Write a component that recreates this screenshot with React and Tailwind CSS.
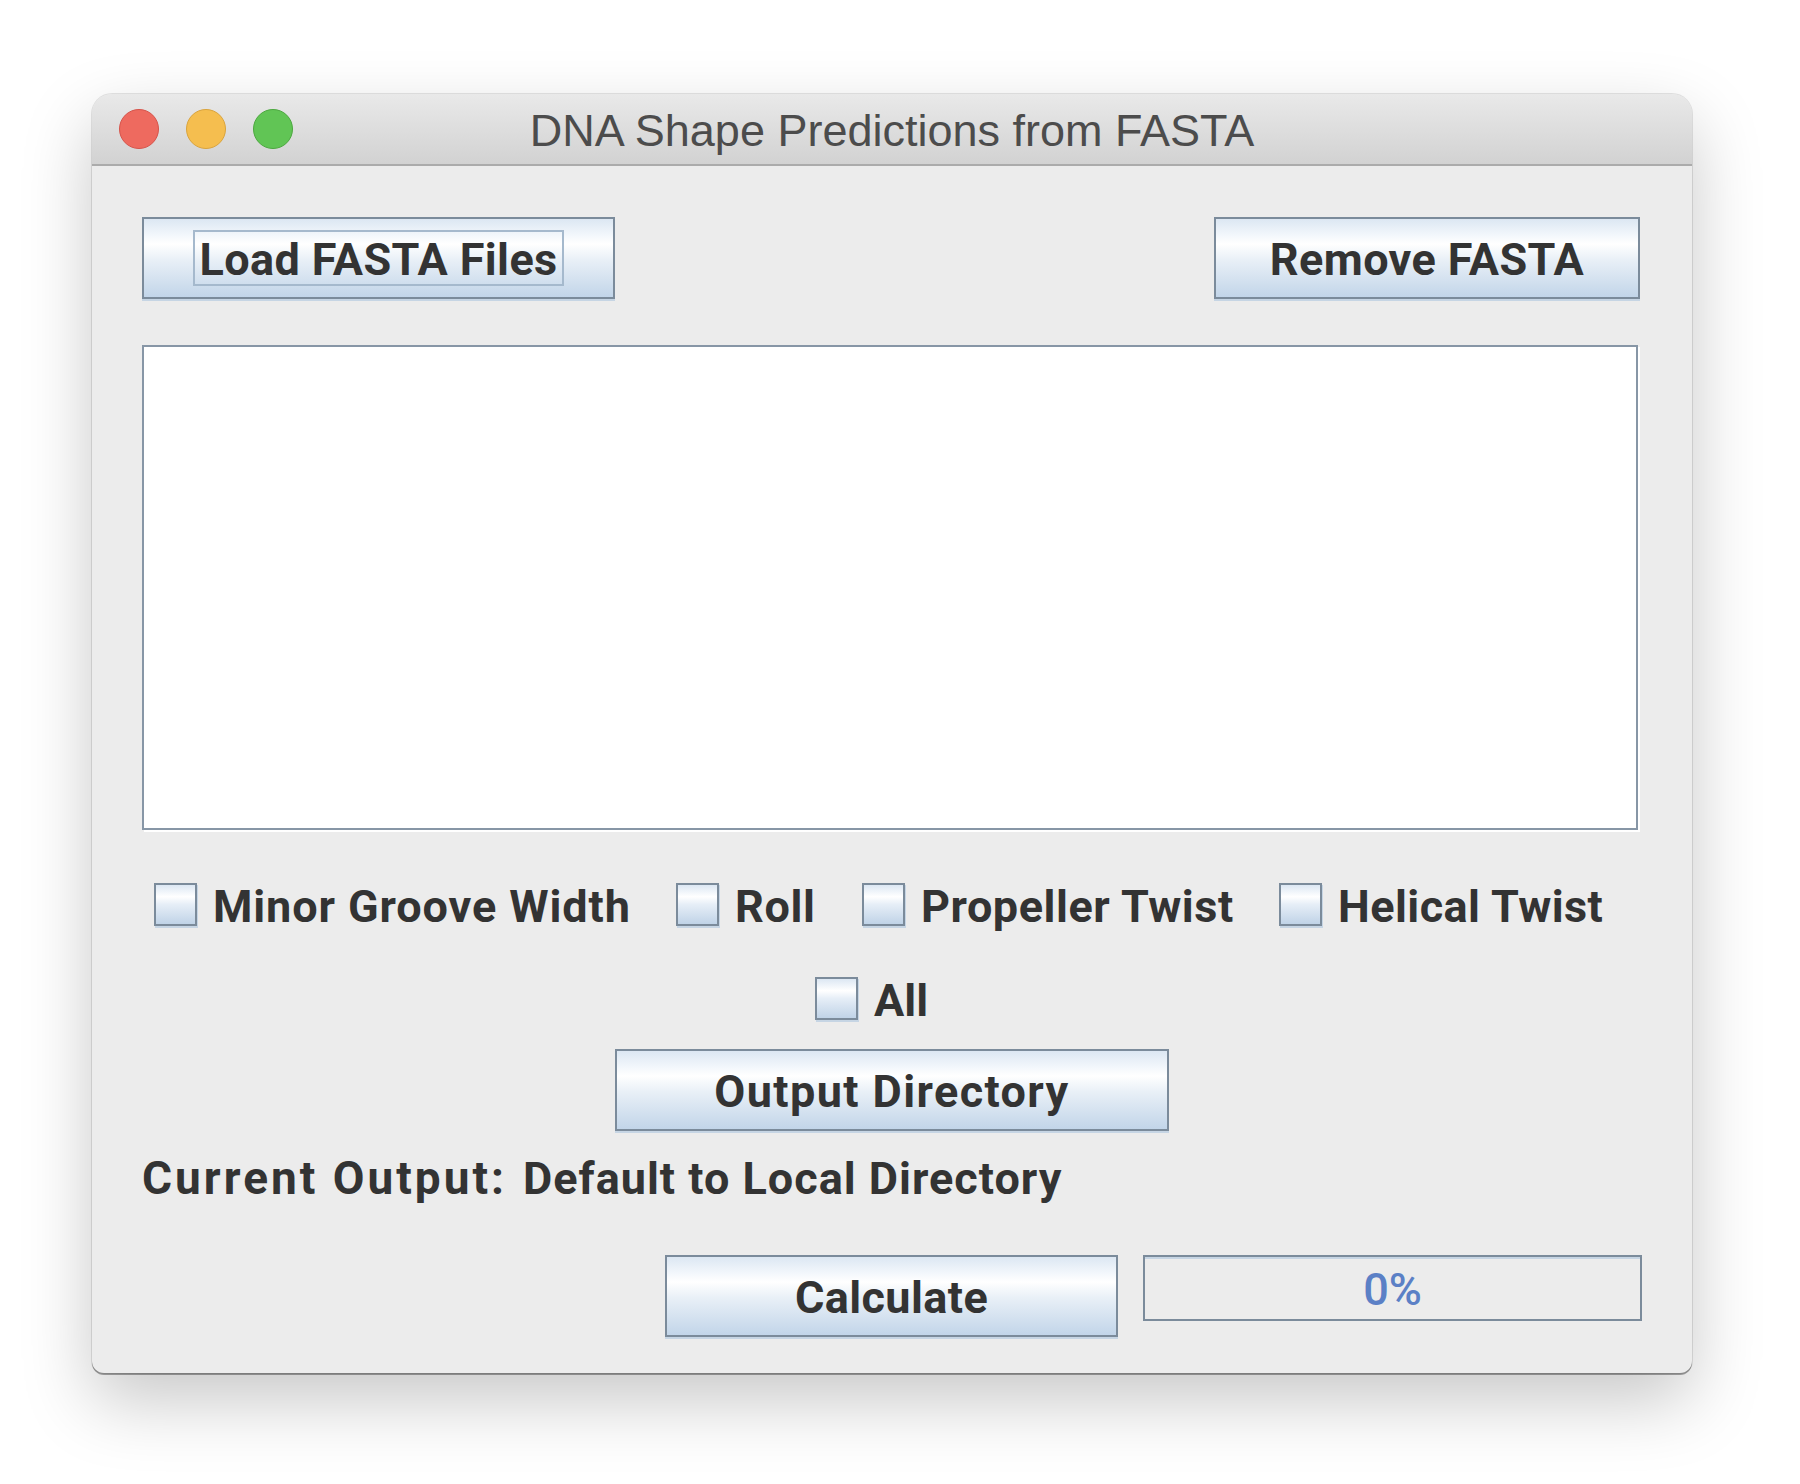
import React from "react";

const btnBg =
  "border-2 border-[#7b8b9b] bg-[linear-gradient(to_bottom,#dce7f3_0%,#f4f8fc_22%,#ffffff_32%,#e9f0f7_52%,#c2d5e9_100%)] shadow-[0_2px_0_#c6d5e4]";

function JButton({ children, className = "", textClass = "tracking-[0.4px]", focus = false }) {
  return (
    <div className={`flex items-center justify-center ${btnBg} ${className}`}>
      {focus ? (
        <span className={`inline-block border-2 border-[#a5b9cd] px-[4px] pt-[3px] leading-[49px] font-['Roboto'] font-bold text-[45px] text-[#333333] ${textClass}`}>
          {children}
        </span>
      ) : (
        <span className={`mt-[4px] leading-[52px] font-['Roboto'] font-bold text-[45px] text-[#333333] whitespace-nowrap ${textClass}`}>
          {children}
        </span>
      )}
    </div>
  );
}

function CheckBox({ label, className = "", textClass = "" }) {
  return (
    <div className={`flex items-center gap-[16px] h-[43px] shrink-0 ${className}`}>
      <div className="w-[43px] h-[43px] shrink-0 border-2 border-[#7b8b9b] bg-[linear-gradient(to_bottom,#dce7f3_0%,#ffffff_30%,#e6eef7_50%,#c0d3e7_100%)] shadow-[1px_2px_0_#c6d5e4]" />
      <span className={`mt-[4px] font-['Roboto'] font-bold text-[45px] leading-[53px] text-[#333333] whitespace-nowrap ${textClass}`}>
        {label}
      </span>
    </div>
  );
}

export default function App() {
  return (
    <div className="w-[1800px] h-[1484px] bg-white pt-[94px] pl-[92px]">
      <div className="w-[1600px] rounded-t-[20px] rounded-b-[12px] overflow-hidden bg-[#ececec] shadow-[0_28px_70px_rgba(0,0,0,0.22),0_0_0_1px_rgba(0,0,0,0.10),0_2px_0_#a8a8a8]">
        {/* Title bar */}
        <div className="relative h-[72px] flex items-center justify-center bg-[linear-gradient(to_bottom,#e9e9e9,#d2d2d2)] border-b-2 border-[#ababab]">
          <div className="absolute left-[27px] top-[15px] flex gap-[27px]">
            <div className="w-[40px] h-[40px] rounded-full bg-[#ee6a5f] border border-[#d5534a]" />
            <div className="w-[40px] h-[40px] rounded-full bg-[#f5be4f] border border-[#d9a33c]" />
            <div className="w-[40px] h-[40px] rounded-full bg-[#61c555] border border-[#4ba73e]" />
          </div>
          <span className="font-['Liberation_Sans'] text-[45px] text-[#4c4c4c] leading-none mt-[3px]">
            DNA Shape Predictions from FASTA
          </span>
        </div>

        {/* Body */}
        <div className="flex flex-col px-[50px] pt-[51px] pb-[36px]">
          <div className="flex justify-between h-[82px]">
            <JButton className="w-[473px] h-[82px]" focus>
              Load FASTA Files
            </JButton>
            <JButton className="w-[426px] h-[82px] mr-[2px]">Remove FASTA</JButton>
          </div>

          <div className="mt-[46px] w-[1496px] h-[485px] bg-white border-2 border-[#8796a6] shadow-[2px_2px_0_#ffffff]" />

          <div className="mt-[53px] flex items-center gap-[47px] pl-[12px] h-[43px]">
            <CheckBox label="Minor Groove Width" className="w-[475px]" textClass="tracking-[0.9px]" />
            <CheckBox label="Roll" className="w-[139px]" textClass="tracking-[0.6px]" />
            <CheckBox label="Propeller Twist" className="w-[370px]" textClass="tracking-[0.55px]" />
            <CheckBox label="Helical Twist" className="w-[323px]" textClass="tracking-[0.45px]" />
          </div>

          <div className="mt-[51px] flex items-center pl-[673px] h-[43px]">
            <CheckBox label="All" />
          </div>

          <JButton className="mt-[29px] self-center w-[554px] h-[82px]" textClass="tracking-[1.4px]">
            Output Directory
          </JButton>

          <div className="mt-[22px] h-[51px] flex items-center font-['Roboto'] font-bold leading-[53px] text-[#333333] whitespace-nowrap">
            <span className="w-[381px] shrink-0 text-[46px] tracking-[3px]">Current Output:</span>
            <span className="text-[45px] tracking-[1px]">Default to Local Directory</span>
          </div>

          <div className="mt-[51px] flex justify-end gap-[25px] h-[82px]">
            <JButton className="w-[453px] h-[82px]">Calculate</JButton>
            <div className="w-[499px] h-[66px] border-2 border-[#7b8b9b] bg-[#ececec] shadow-[inset_0_2px_0_#c6d5e4] flex items-center justify-center">
              <span className="mt-[2px] font-['Roboto'] font-medium text-[45px] text-[#5b80c6] leading-none">
                0%
              </span>
            </div>
          </div>
        </div>
      </div>
    </div>
  );
}
